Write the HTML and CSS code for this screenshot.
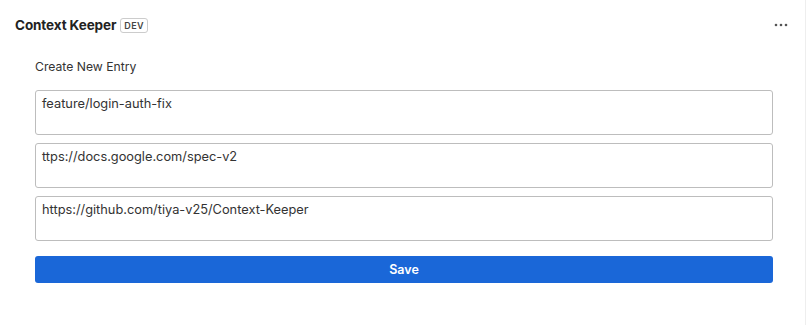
FILE: index.html
```html
<!DOCTYPE html>
<html>
<head>
<meta charset="utf-8">
<link rel="stylesheet" href="styles.css">
</head>
<body>
<div class="app">
  <header class="header">
    <div class="brand">
      <span class="title">Context Keeper</span>
      <span class="badge">DEV</span>
    </div>
    <button class="more" aria-label="More">
      <svg width="14" height="4" viewBox="0 0 14 4"><circle cx="2" cy="2" r="1.3" fill="#555"/><circle cx="7" cy="2" r="1.3" fill="#555"/><circle cx="12" cy="2" r="1.3" fill="#555"/></svg>
    </button>
  </header>
  <main class="form">
    <div class="label">Create New Entry</div>
    <textarea class="field">feature/login-auth-fix</textarea>
    <textarea class="field">ttps://docs.google.com/spec-v2</textarea>
    <textarea class="field">https://github.com/tiya-v25/Context-Keeper</textarea>
    <button class="save">Save</button>
  </main>
</div>
</body>
</html>
```
FILE: styles.css
```css
html, body {
  margin: 0;
  padding: 0;
  background: #fff;
}
body {
  font-family: Inter, "Noto Sans", sans-serif;
  color: #222;
  border-right: 1px solid #eee;
  height: 325px;
  box-sizing: border-box;
}
.app {
  display: flex;
  flex-direction: column;
}
.header {
  display: flex;
  align-items: center;
  justify-content: space-between;
  padding: 15px 15px 0 15px;
  height: 20px;
}
.brand {
  display: flex;
  align-items: center;
  gap: 4px;
}
.title {
  font-size: 13.5px;
  font-weight: 700;
  color: #222;
  letter-spacing: -0.1px;
}
.badge {
  font-size: 9px;
  font-weight: 600;
  color: #444;
  border: 1px solid #ccc;
  border-radius: 3px;
  padding: 1px 3px;
  line-height: 11px;
  letter-spacing: 0.3px;
}
.more {
  border: none;
  background: none;
  padding: 0;
  display: flex;
  margin-right: 2px;
}
.form {
  display: flex;
  flex-direction: column;
  padding: 0 32px 0 35px;
  margin-top: 24px;
}
.label {
  font-size: 12.2px;
  color: #333;
  height: 18px;
  margin-bottom: 13px;
}
.field {
  font-family: inherit;
  font-size: 12.8px;
  color: #333;
  height: 45px;
  box-sizing: border-box;
  border: 1px solid #bdbdbd;
  border-radius: 3px;
  padding: 4px 6px;
  margin: 0 0 8px 0;
  resize: none;
  outline: none;
  line-height: 18px;
}
.save {
  margin-top: 7px;
  height: 27px;
  border: none;
  border-radius: 3px;
  background: #1a67d8;
  color: #fff;
  font-family: inherit;
  font-size: 12.5px;
  font-weight: 600;
}
```
